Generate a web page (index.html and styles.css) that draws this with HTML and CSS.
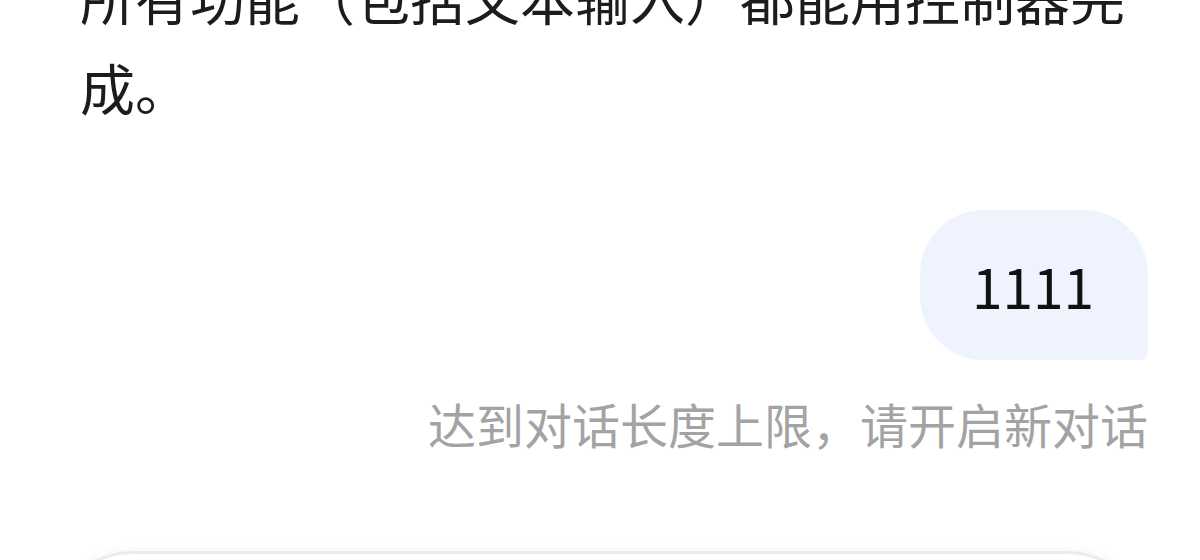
FILE: index.html
```html
<!DOCTYPE html>
<html lang="zh-CN">
<head>
<meta charset="utf-8">
<title>对话</title>
<link rel="stylesheet" href="styles.css">
</head>
<body>
<main class="chat">
  <div class="answer">
    <p>所有功能（包括文本输入）都能用控制器完成。</p>
  </div>
  <div class="user-row">
    <div class="bubble">1111</div>
  </div>
  <p class="notice">达到对话长度上限，请开启新对话</p>
</main>
<div class="composer"></div>
</body>
</html>
```
FILE: styles.css
```css
html, body {
  margin: 0;
  padding: 0;
  background: #ffffff;
  height: 560px;
  overflow: hidden;
}
body {
  font-family: "Noto Sans CJK SC", "Noto Sans", sans-serif;
  color: #1a1a1a;
}
.chat {
  padding: 0 52px;
}
.answer {
  margin-top: -49px;
  padding-left: 28px;
}
.answer p {
  margin: 0;
  font-size: 55px;
  line-height: 90px;
  color: #1c1c1e;
}
.user-row {
  display: flex;
  justify-content: flex-end;
  margin-top: 79px;
}
.bubble {
  height: 150px;
  box-sizing: border-box;
  padding: 0 54px 0 52px;
  display: flex;
  align-items: center;
  background: #eef3fd;
  border-radius: 64px 64px 8px 64px;
  font-size: 55px;
  color: #111111;
}
.notice {
  margin: 30px 0 0;
  text-align: right;
  font-size: 48px;
  line-height: 67px;
  color: #a3a3a3;
}
.composer {
  margin: 94px 52px 0;
  height: 120px;
  border: 3px solid #ebebeb;
  border-bottom: none;
  border-radius: 80px 80px 0 0;
  box-shadow: 0 -3px 10px rgba(0, 0, 0, 0.03);
}
```
